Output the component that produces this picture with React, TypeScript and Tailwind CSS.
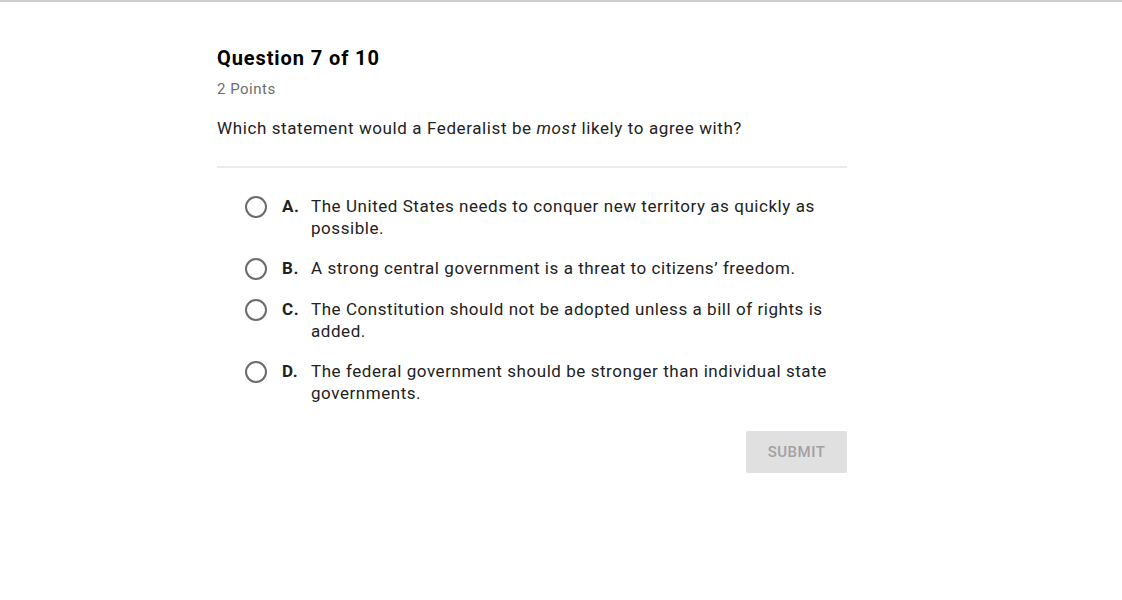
const options = [
  { letter: 'A.', text: 'The United States needs to conquer new territory as quickly as possible.' },
  { letter: 'B.', text: 'A strong central government is a threat to citizens\u2019 freedom.' },
  { letter: 'C.', text: 'The Constitution should not be adopted unless a bill of rights is added.' },
  { letter: 'D.', text: 'The federal government should be stronger than individual state governments.' },
];

function Radio() {
  return (
    <span className="mt-[1px] block h-[22px] w-[22px] shrink-0 rounded-full border-2 border-[#6b6b6b] bg-white" />
  );
}

export default function App() {
  return (
    <div className="min-h-[600px] w-full border-t-2 border-[#cfcfcf] bg-white font-['Roboto',sans-serif] text-[#1c1c1c]">
      <div className="ml-[217px] w-[630px] pt-[44px]">
        <h1 className="text-[20px] font-bold leading-[24px] tracking-[0.9px] text-black">Question 7 of 10</h1>
        <p className="mt-[9px] text-[15px] leading-[20px] tracking-[0.5px] text-[#6e6e6e]">2 Points</p>
        <p className="mt-[17px] text-[17px] leading-[24px] tracking-[0.6px] text-[#222]">
          Which statement would a Federalist be <em>most</em> likely to agree with?
        </p>
        <div className="mt-[26px] h-[2px] bg-[#ececec]" />

        <ul className="mt-[27px] flex flex-col gap-[18px] pl-[28px] pr-[18px]">
          {options.map((o) => (
            <li key={o.letter} className="flex items-start">
              <Radio />
              <div className="ml-[15px] flex text-[17px] leading-[22px] tracking-[0.55px] text-[#222]">
                <span className="w-[29px] shrink-0 font-bold">{o.letter}</span>
                <span>{o.text}</span>
              </div>
            </li>
          ))}
        </ul>

        <div className="mt-[27px] flex justify-end">
          <button className="h-[42px] w-[101px] rounded-[2px] bg-[#e0e0e0] text-[15px] font-medium tracking-[0.5px] text-[#a2a2a2]">
            SUBMIT
          </button>
        </div>
      </div>
    </div>
  );
}
